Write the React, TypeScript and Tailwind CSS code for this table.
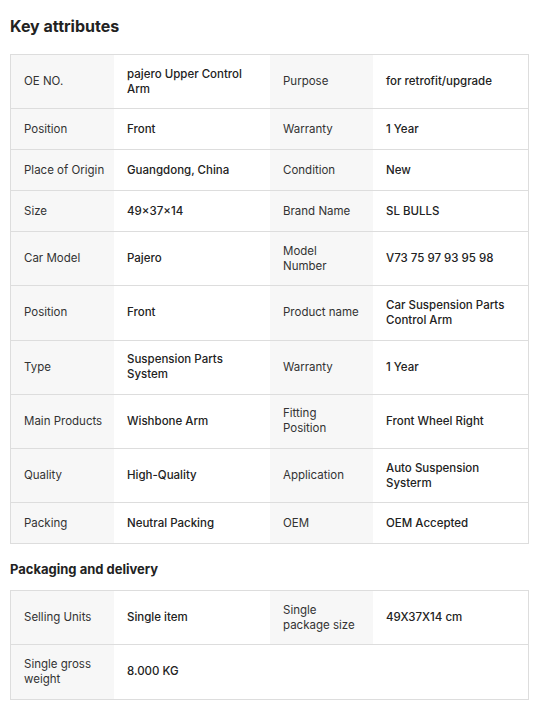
import React from 'react';

type Row = [string, string, string?, string?];

const KEY_ATTRS: Row[] = [
  ['OE NO.', 'pajero Upper Control Arm', 'Purpose', 'for retrofit/upgrade'],
  ['Position', 'Front', 'Warranty', '1 Year'],
  ['Place of Origin', 'Guangdong, China', 'Condition', 'New'],
  ['Size', '49×37×14', 'Brand Name', 'SL BULLS'],
  ['Car Model', 'Pajero', 'Model Number', 'V73 75 97 93 95 98'],
  ['Position', 'Front', 'Product name', 'Car Suspension Parts Control Arm'],
  ['Type', 'Suspension Parts System', 'Warranty', '1 Year'],
  ['Main Products', 'Wishbone Arm', 'Fitting Position', 'Front Wheel Right'],
  ['Quality', 'High-Quality', 'Application', 'Auto Suspension Systerm'],
  ['Packing', 'Neutral Packing', 'OEM', 'OEM Accepted'],
];

const PACKAGING: Row[] = [
  ['Selling Units', 'Single item', 'Single package size', '49X37X14 cm'],
  ['Single gross weight', '8.000 KG'],
];

function AttrTable({ rows }: { rows: Row[] }) {
  return (
    <div className="w-[519px] border border-[#dddddd] border-b-0">
      {rows.map((r, i) => (
        <div key={i} className="grid grid-cols-[103px_156px_103px_155px] border-b border-[#dddddd]">
          <div className="bg-[#f7f7f7] pl-[13px] pr-[6px] py-[11.6px] min-h-[40px] flex items-center text-[#333333]">{r[0]}</div>
          <div className="pl-[13px] pr-[8px] py-[11.6px] min-h-[40px] flex items-center font-medium text-[#222222]">{r[1]}</div>
          {r[2] !== undefined ? (
            <>
              <div className="bg-[#f7f7f7] pl-[13px] pr-[14px] py-[11.6px] min-h-[40px] flex items-center text-[#333333]">{r[2]}</div>
              <div className="pl-[13px] pr-[8px] py-[11.6px] min-h-[40px] flex items-center font-medium text-[#222222]">{r[3]}</div>
            </>
          ) : (
            <div className="col-span-2" />
          )}
        </div>
      ))}
    </div>
  );
}

export default function App() {
  return (
    <div className="w-[558px] h-[716px] bg-white px-[10px] text-[11.5px] leading-[15px] overflow-hidden" style={{ fontFamily: 'Inter, "Noto Sans", sans-serif' }}>
      <h2 className="pt-[16px] text-[16px] leading-[21px] font-bold text-[#222222]">Key attributes</h2>
      <div className="mt-[17px]">
        <AttrTable rows={KEY_ATTRS} />
      </div>
      <h3 className="mt-[17px] text-[13px] leading-[17px] font-bold text-[#222222]">Packaging and delivery</h3>
      <div className="mt-[12px]">
        <AttrTable rows={PACKAGING} />
      </div>
    </div>
  );
}
